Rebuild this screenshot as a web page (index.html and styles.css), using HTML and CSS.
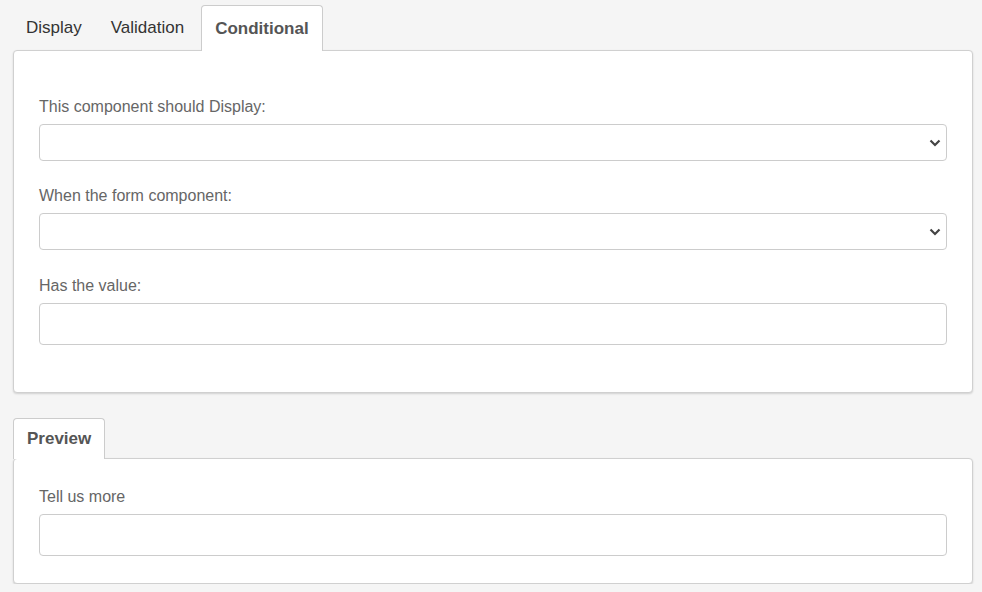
FILE: index.html
```html
<!DOCTYPE html>
<html>
<head>
<meta charset="utf-8">
<link rel="stylesheet" href="styles.css">
</head>
<body>
<div class="page">
  <ul class="tabs">
    <li class="tab">Display</li>
    <li class="tab">Validation</li>
    <li class="tab active">Conditional</li>
  </ul>
  <div class="panel settings">
    <div class="field">
      <label class="label">This component should Display:</label>
      <div class="select"><svg class="chev" width="12" height="8" viewBox="0 0 12 8"><path d="M1.5 1.5 L6 6 L10.5 1.5" fill="none" stroke="#444" stroke-width="2.2"/></svg></div>
    </div>
    <div class="field">
      <label class="label">When the form component:</label>
      <div class="select"><svg class="chev" width="12" height="8" viewBox="0 0 12 8"><path d="M1.5 1.5 L6 6 L10.5 1.5" fill="none" stroke="#444" stroke-width="2.2"/></svg></div>
    </div>
    <div class="field field-text">
      <label class="label">Has the value:</label>
      <div class="input"></div>
    </div>
  </div>
  <ul class="tabs preview-tabs">
    <li class="tab active">Preview</li>
  </ul>
  <div class="panel preview">
    <div class="field">
      <label class="label">Tell us more</label>
      <div class="input"></div>
    </div>
  </div>
</div>
</body>
</html>
```
FILE: styles.css
```css
html, body {
  margin: 0;
  padding: 0;
  background: #f5f5f5;
  font-family: "Liberation Sans", Arial, sans-serif;
}
.page {
  width: 960px;
  margin-left: 13px;
  padding-top: 5px;
}
.tabs {
  list-style: none;
  margin: 0;
  padding: 0;
  display: flex;
  height: 45px;
  position: relative;
  z-index: 1;
}
.tab {
  padding: 12px 13px 0 12px;
  font-size: 17px;
  color: #333;
  height: 45px;
  box-sizing: border-box;
  border: 1px solid transparent;
  border-bottom: none;
}
.tab + .tab {
  padding-left: 14px;
}
.tab.active {
  background: #fff;
  border-color: #cccccc;
  border-radius: 4px 4px 0 0;
  font-weight: bold;
  color: #555;
  padding: 13px 13px 0 13px;
  height: 46px;
  margin-left: 3px;
}
.panel {
  background: #fff;
  border: 1px solid #d0d0d0;
  border-radius: 4px;
  box-shadow: 0 1px 2px rgba(0,0,0,0.15);
  padding: 0 25px;
}
.settings {
  padding-top: 47px;
  padding-bottom: 47px;
}
.settings .field + .field {
  margin-top: 26px;
}
.settings .field + .field-text {
  margin-top: 27px;
}
.label {
  display: block;
  font-size: 16px;
  color: #666;
  line-height: 18px;
  margin-bottom: 8px;
}
.select {
  height: 37px;
  border: 1px solid #cccccc;
  border-radius: 4px;
  box-sizing: border-box;
  display: flex;
  align-items: center;
  justify-content: flex-end;
  padding-right: 5px;
}
.chev {
  display: block;
}
.input {
  height: 42px;
  border: 1px solid #cccccc;
  border-radius: 4px;
  box-sizing: border-box;
}
.preview-tabs {
  margin-top: 25px;
  height: 40px;
}
.preview-tabs .tab.active {
  margin-left: 0;
  height: 41px;
  padding: 10px 13px 0 13px;
  width: 92px;
}
.preview {
  padding-top: 29px;
  padding-bottom: 27px;
}
```
